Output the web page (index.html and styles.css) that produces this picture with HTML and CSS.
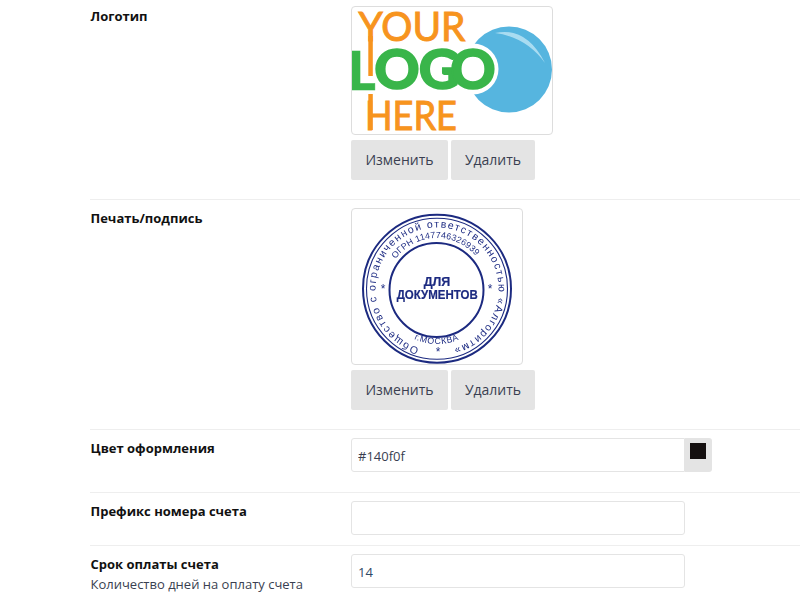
FILE: index.html
```html
<!DOCTYPE html>
<html lang="ru">
<head>
<meta charset="utf-8">
<title>Настройки</title>
<link rel="stylesheet" href="styles.css">
</head>
<body>
<main class="form">
  <section class="row row-first">
    <div class="label"><b>Логотип</b></div>
    <div class="field">
      <div class="thumb">
        <svg class="logo" width="200" height="127" viewBox="352 7 200 127">
          <circle cx="509" cy="69.5" r="43" fill="#56b5df"/>
          <path d="M495 33 Q526 26 545 63 Q526 37 495 33 Z" fill="#a9dcf1"/>
          <circle cx="473" cy="69" r="25.5" fill="#fff"/>
          <text class="l-orange" x="358.5" y="41" textLength="107" lengthAdjust="spacingAndGlyphs">YOUR</text>
          <text class="l-green l-letter" x="348" y="89.5">L</text>
          <rect x="363" y="48" width="5" height="31" fill="#fff"/>
          <circle cx="397" cy="69" r="24" fill="#fff"/>
          <rect x="368.3" y="36" width="4.5" height="40" fill="#f7941e"/>
          <text class="l-green l-mid" x="397" y="89">O</text>
          <text class="l-green l-mid" x="439" y="89">G</text>
          <text class="l-green l-mid" x="473" y="89">O</text>
          <text class="l-orange" x="365" y="130" textLength="92" lengthAdjust="spacingAndGlyphs">HERE</text>
          <rect x="368.3" y="94" width="4.5" height="36" fill="#f7941e"/>
        </svg>
      </div>
      <div class="actions">
        <button class="btn btn-edit" type="button">Изменить</button>
        <button class="btn btn-del" type="button">Удалить</button>
      </div>
    </div>
  </section>

  <section class="row">
    <div class="label"><b>Печать/подпись</b></div>
    <div class="field">
      <div class="thumb">
        <svg class="stamp" width="170" height="155" viewBox="352 209 170 155">
          <defs>
            <path id="arc-outer" d="M419 347.8 A61.5 61.5 0 1 1 452.9 348.4"/>
            <path id="arc-inner" d="M395.7 259 A51 51 0 0 1 477.2 257.6"/>
            <path id="arc-bottom" d="M414 339 A55 55 0 0 0 460 339"/>
          </defs>
          <circle class="ring" cx="437" cy="288.7" r="74" stroke-width="2"/>
          <circle class="ring" cx="437" cy="288.7" r="70.5" stroke-width="1.1"/>
          <circle class="ring" cx="436.5" cy="290" r="47" stroke-width="2"/>
          <text class="s-txt"><textPath href="#arc-outer" textLength="350" lengthAdjust="spacing">Общество с ограниченной ответственностью «Алгоритм»</textPath></text>
          <text class="s-small"><textPath href="#arc-inner" textLength="92" lengthAdjust="spacing">ОГРН 1147746326939</textPath></text>
          <text class="s-small"><textPath href="#arc-bottom" textLength="46" lengthAdjust="spacing">г.МОСКВА</textPath></text>
          <text class="s-star" x="383" y="292.5">*</text>
          <text class="s-star" x="490" y="293">*</text>
          <text class="s-star" x="438" y="356">*</text>
          <text class="s-big s-mid" x="437" y="286">ДЛЯ</text>
          <text class="s-big" x="396.7" y="298.5" textLength="81" lengthAdjust="spacingAndGlyphs">ДОКУМЕНТОВ</text>
        </svg>
      </div>
      <div class="actions">
        <button class="btn btn-edit" type="button">Изменить</button>
        <button class="btn btn-del" type="button">Удалить</button>
      </div>
    </div>
  </section>

  <section class="row row-color">
    <div class="label"><b>Цвет оформления</b></div>
    <div class="field">
      <div class="color-group">
        <input class="input input-joined" type="text" value="#140f0f">
        <span class="addon"><i class="swatch"></i></span>
      </div>
    </div>
  </section>

  <section class="row row-tight">
    <div class="label"><b>Префикс номера счета</b></div>
    <div class="field"><input class="input" type="text" value=""></div>
  </section>

  <section class="row row-tight">
    <div class="label"><b>Срок оплаты счета</b><small>Количество дней на оплату счета</small></div>
    <div class="field"><input class="input input-num" type="text" value="14"></div>
  </section>
</main>
</body>
</html>
```
FILE: styles.css
```css
* { box-sizing: border-box; }
html, body {
  margin: 0;
  height: 100%;
  overflow: hidden;
  background: #fff;
}
body {
  font-family: "Open Sans", "Liberation Sans", sans-serif;
  font-size: 13px;
  line-height: 20px;
  color: #3a3f51;
}
.form { padding-left: 90px; }
.row {
  display: flex;
  border-top: 1px solid #eeeeee;
  padding: 8px 0 19px;
}
.row-first { border-top: 0; padding-top: 6px; }
.row-color { padding-bottom: 20px; }
.row-tight { padding-bottom: 10px; }
.label { width: 261px; flex: none; padding-left: 0.5px; }
.label b { display: block; font-weight: 700; color: #111; }
.label small { display: block; font-size: 13px; color: #3a3f51; }
.field { flex: none; width: 449px; }
.thumb {
  display: inline-block;
  vertical-align: top;
  border: 1px solid #dddddd;
  border-radius: 4px;
  background: #fff;
  overflow: hidden;
}
.thumb svg { display: block; }
.stamp { filter: blur(0.4px); }
.actions { display: flex; gap: 3px; margin-top: 5px; }
.btn {
  height: 40px;
  padding: 0;
  border: 0;
  border-radius: 2px;
  background: #e4e4e4;
  color: #3a3f51;
  font: 400 14px/20px "Open Sans", "Liberation Sans", sans-serif;
}
.btn-edit { width: 97px; }
.btn-del { width: 84px; }
.input {
  display: block;
  width: 334px;
  height: 34px;
  padding: 7px 6px 5px;
  border: 1px solid #e4e4e4;
  border-radius: 3px;
  background: #fff;
  color: #2f4a66;
  font: 400 13px/20px "Open Sans", "Liberation Sans", sans-serif;
  outline: 0;
}
.color-group { display: flex; }
.input-joined { border-radius: 3px 0 0 3px; color: #3a3f51; }
.addon {
  display: block;
  width: 27px;
  height: 34px;
  padding: 5px 5px 0 5px;
  background: #e4e4e4;
  border-radius: 0 3px 3px 0;
}
.swatch { display: block; width: 16px; height: 16px; background: #140f0f; }
.l-orange { font: 400 40px "Lato", sans-serif; fill: #f7941e; stroke: #f7941e; stroke-width: 1; }
.l-green { font: 900 56px "Lato", sans-serif; fill: #39b54a; stroke: #39b54a; stroke-width: 1.6; }
.l-letter { font-size: 53px; stroke-width: 0.6; }
.l-mid { text-anchor: middle; }
.ring { fill: none; stroke: #1c2a80; }
.s-txt { font: 400 10.5px "Liberation Sans", sans-serif; fill: #1f2d84; }
.s-small { font: 400 8.8px "Liberation Sans", sans-serif; fill: #1f2d84; }
.s-star { font: 400 12px "Liberation Sans", sans-serif; fill: #1f2d84; text-anchor: middle; }
.s-big { font: 700 12.5px "Liberation Sans", sans-serif; fill: #1c2a80; stroke: #1c2a80; stroke-width: 0.2; }
.s-mid { text-anchor: middle; }
```
